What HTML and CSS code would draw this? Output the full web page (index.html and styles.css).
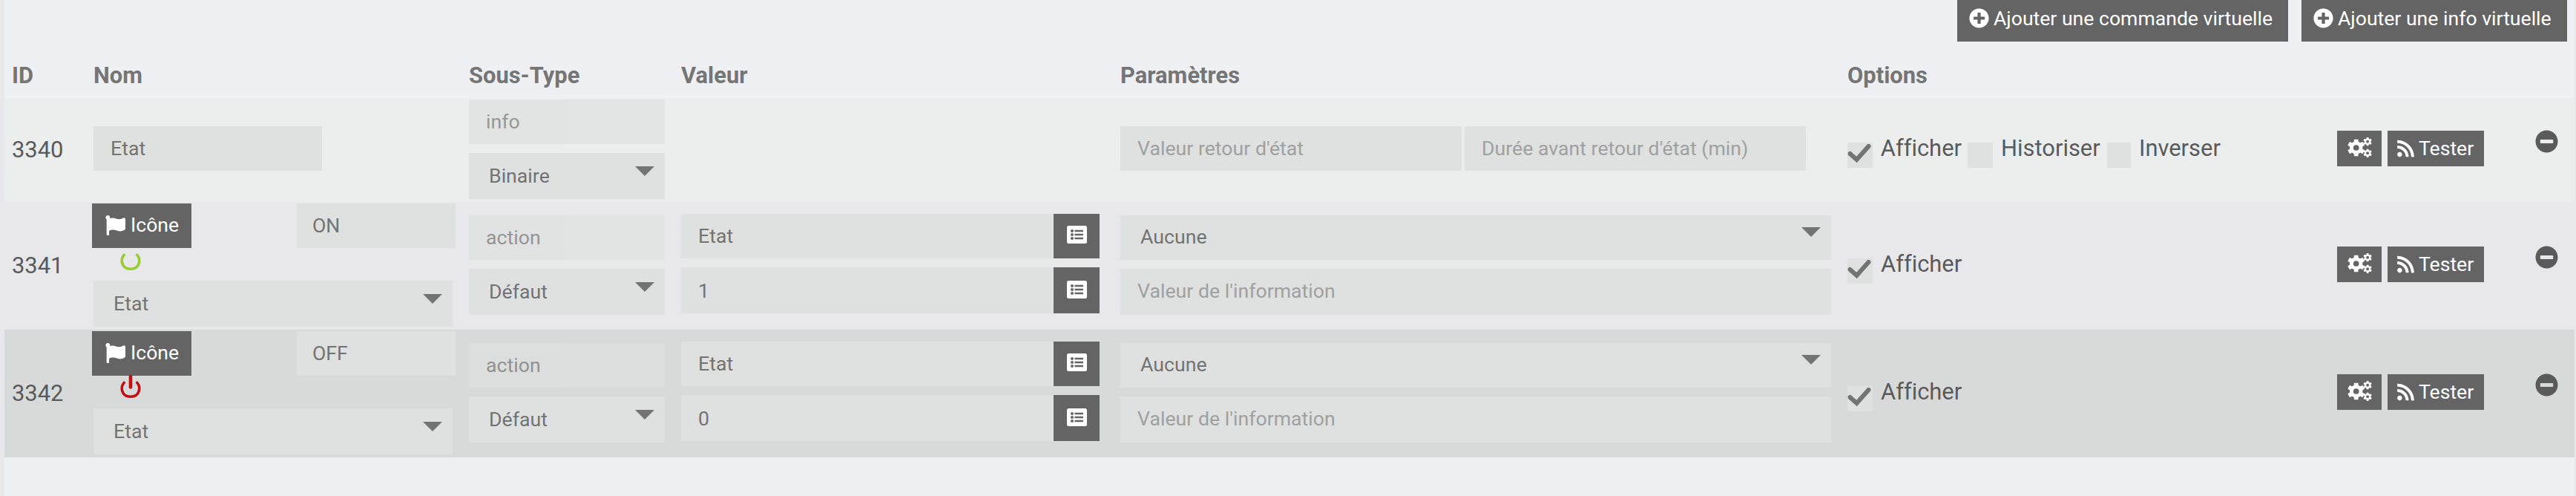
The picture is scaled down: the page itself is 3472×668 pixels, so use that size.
FILE: index.html
```
<!DOCTYPE html>
<html lang="fr">
<head>
<meta charset="utf-8">
<title>Commandes</title>
<link rel="stylesheet" href="styles.css">
</head>
<body>
<svg class="defs" width="0" height="0" aria-hidden="true">
  <symbol id="plus" viewBox="0 0 512 512"><path d="M256 8C119 8 8 119 8 256s111 248 248 248 248-111 248-248S393 8 256 8zm144 276c0 6.600-5.400 12-12 12h-92v92c0 6.600-5.400 12-12 12h-56c-6.600 0-12-5.400-12-12v-92h-92c-6.600 0-12-5.400-12-12v-56c0-6.600 5.400-12 12-12h92v-92c0-6.600 5.400-12 12-12h56c6.600 0 12 5.400 12 12v92h92c6.600 0 12 5.400 12 12v56z"/></symbol>
  <symbol id="minus" viewBox="0 0 512 512"><path d="M256 8C119 8 8 119 8 256s111 248 248 248 248-111 248-248S393 8 256 8zM124 296c-6.600 0-12-5.400-12-12v-56c0-6.600 5.400-12 12-12h264c6.600 0 12 5.400 12 12v56c0 6.600-5.400 12-12 12H124z"/></symbol>
  <symbol id="flag" viewBox="0 0 512 512"><path d="M349.565 98.783C295.978 98.783 251.721 64 184.348 64c-24.955 0-47.309 4.384-68.045 12.013a55.947 55.947 0 0 0 3.586-23.562C118.117 24.015 94.806 1.206 66.338.048 34.345-1.254 8 24.296 8 56c0 19.026 9.497 35.825 24 45.945V488c0 13.255 10.745 24 24 24h16c13.255 0 24-10.745 24-24v-94.400c28.311-12.064 63.582-22.122 114.435-22.122 53.588 0 97.844 34.783 165.217 34.783 48.169 0 86.667-16.294 122.505-40.858C506.840 359.452 512 349.571 512 339.045v-243.100c0-23.393-24.269-38.870-45.485-29.016-34.338 15.948-76.454 31.854-116.950 31.854z"/></symbol>
  <symbol id="rss" viewBox="0 0 448 512"><path d="M128.081 415.959c0 35.369-28.672 64.041-64.041 64.041S0 451.328 0 415.959s28.672-64.041 64.041-64.041 64.040 28.673 64.040 64.041zm175.660 47.250c-8.354-154.600-132.185-278.587-286.950-286.950C7.656 175.765 0 183.105 0 192.253v48.069c0 8.415 6.490 15.472 14.887 16.018 111.832 7.284 201.473 96.702 208.772 208.772.547 8.397 7.604 14.887 16.018 14.887h48.069c9.149.001 16.489-7.655 15.995-16.790zm144.249.288C439.596 229.677 251.465 40.445 16.503 32.010 7.473 31.686 0 38.981 0 48.016v48.068c0 8.625 6.835 15.645 15.453 15.999 191.179 7.839 344.627 161.316 352.465 352.465.353 8.618 7.373 15.453 15.999 15.453h48.068c9.034-.001 16.329-7.474 16.005-16.504z"/></symbol>
  <symbol id="list" viewBox="0 0 27 24"><rect width="27" height="24" rx="2.500"/><g fill="#646464"><circle cx="7" cy="7" r="2"/><circle cx="7" cy="12" r="2"/><circle cx="7" cy="17" r="2"/><rect x="10.500" y="5.700" width="11.500" height="2.600" rx=".5"/><rect x="10.500" y="10.700" width="11.500" height="2.600" rx=".5"/><rect x="10.500" y="15.700" width="11.500" height="2.600" rx=".5"/></g></symbol>
  <symbol id="gear" viewBox="-12 -12 24 24"><g fill="currentColor"><rect x="-3" y="-12" width="6" height="24" rx="1"/><rect x="-3" y="-12" width="6" height="24" rx="1" transform="rotate(60)"/><rect x="-3" y="-12" width="6" height="24" rx="1" transform="rotate(120)"/></g><circle r="6.500" fill="none" stroke="currentColor" stroke-width="5"/><circle r="4" fill="#646464"/></symbol>
  <symbol id="cogs" viewBox="0 0 34 28"><use href="#gear" x="0" y="2.500" width="24" height="24"/><use href="#gear" x="22" y="0" width="12" height="12"/><use href="#gear" x="22" y="16" width="12" height="12"/></symbol>
  <symbol id="check" viewBox="0 0 32 26"><path d="M3.500 14l9 8L28.500 4" fill="none" stroke="currentColor" stroke-width="6" stroke-linecap="round"/></symbol>
  <symbol id="ring" viewBox="0 0 28 32"><path d="M6.300 9.200C-.8 16 1.500 29.200 14 29.200S28.800 16 21.700 9.200" fill="none" stroke="currentColor" stroke-width="3.600"/></symbol>
  <symbol id="power" viewBox="0 0 28 32"><use href="#ring"/><path d="M14 2v14.500" stroke="currentColor" stroke-width="4.600" stroke-linecap="round"/></symbol>
</svg>
<main class="panel">
  <div class="toolbar">
    <a class="btn btn-add"><svg><use href="#plus"/></svg>Ajouter une commande virtuelle</a>
    <a class="btn btn-add"><svg><use href="#plus"/></svg>Ajouter une info virtuelle</a>
  </div>
  <div class="row head">
    <div>ID</div><div>Nom</div><div>Sous-Type</div><div>Valeur</div><div>Paramètres</div><div>Options</div>
  </div>

  <div class="row info">
    <div class="id">3340</div>
    <div><div class="field name-field">Etat</div></div>
    <div class="stack type">
      <div class="field disabled">info</div>
      <div class="field select">Binaire</div>
    </div>
    <div></div>
    <div class="pair">
      <div class="field hint">Valeur retour d'état</div>
      <div class="field hint">Durée avant retour d'état (min)</div>
    </div>
    <div class="options">
      <label class="opt-show"><span class="box"><svg><use href="#check"/></svg></span><span class="lbl">Afficher</span></label>
      <label class="opt-log"><span class="box"></span><span class="lbl">Historiser</span></label>
      <label><span class="box narrow"></span><span class="lbl">Inverser</span></label>
    </div>
    <div class="tools">
      <a class="btn btn-sm cog"><svg><use href="#cogs"/></svg></a>
      <a class="btn btn-sm test"><svg><use href="#rss"/></svg>Tester</a>
      <svg class="remove"><use href="#minus"/></svg>
    </div>
  </div>

  <div class="row action">
    <div class="id">3341</div>
    <div class="name">
      <div class="name-top">
        <a class="btn btn-icon"><svg><use href="#flag"/></svg>Icône</a>
        <div class="field">ON</div>
      </div>
      <svg class="state on"><use href="#ring"/></svg>
      <div class="field select">Etat</div>
    </div>
    <div class="stack type">
      <div class="field disabled">action</div>
      <div class="field select">Défaut</div>
    </div>
    <div class="stack value">
      <div class="group"><div class="field">Etat</div><a class="btn pick"><svg><use href="#list"/></svg></a></div>
      <div class="group"><div class="field">1</div><a class="btn pick"><svg><use href="#list"/></svg></a></div>
    </div>
    <div class="stack params">
      <div class="field select">Aucune</div>
      <div class="field hint">Valeur de l'information</div>
    </div>
    <div class="options">
      <label><span class="box"><svg><use href="#check"/></svg></span><span class="lbl">Afficher</span></label>
    </div>
    <div class="tools">
      <a class="btn btn-sm cog"><svg><use href="#cogs"/></svg></a>
      <a class="btn btn-sm test"><svg><use href="#rss"/></svg>Tester</a>
      <svg class="remove"><use href="#minus"/></svg>
    </div>
  </div>

  <div class="row action hover">
    <div class="id">3342</div>
    <div class="name">
      <div class="name-top">
        <a class="btn btn-icon"><svg><use href="#flag"/></svg>Icône</a>
        <div class="field">OFF</div>
      </div>
      <svg class="state off"><use href="#power"/></svg>
      <div class="field select">Etat</div>
    </div>
    <div class="stack type">
      <div class="field disabled">action</div>
      <div class="field select">Défaut</div>
    </div>
    <div class="stack value">
      <div class="group"><div class="field">Etat</div><a class="btn pick"><svg><use href="#list"/></svg></a></div>
      <div class="group"><div class="field">0</div><a class="btn pick"><svg><use href="#list"/></svg></a></div>
    </div>
    <div class="stack params">
      <div class="field select">Aucune</div>
      <div class="field hint">Valeur de l'information</div>
    </div>
    <div class="options">
      <label><span class="box"><svg><use href="#check"/></svg></span><span class="lbl">Afficher</span></label>
    </div>
    <div class="tools">
      <a class="btn btn-sm cog"><svg><use href="#cogs"/></svg></a>
      <a class="btn btn-sm test"><svg><use href="#rss"/></svg>Tester</a>
      <svg class="remove"><use href="#minus"/></svg>
    </div>
  </div>
</main>
</body>
</html>
```
FILE: styles.css
```
* { box-sizing: border-box; }
body {
  margin: 0;
  height: 668px;
  padding: 0 2px 0 6px;
  overflow: hidden;
  background: #e8e8ea;
  color: #5a5a5a;
  font: 30.9px/40px Roboto, sans-serif;
  font-variant-ligatures: none;
}
svg { display: block; fill: currentColor; flex: none; }
.defs { position: absolute; }
.panel { height: 668px; background: #eff0f3; }

.toolbar {
  height: 56px;
  display: flex;
  justify-content: flex-end;
  gap: 18px;
  padding-right: 10px;
}
.btn {
  display: flex;
  align-items: center;
  background: #646464;
  color: #fff;
  font-size: 26.6px;
  line-height: 30px;
  white-space: nowrap;
}
.btn-add { padding: 0 16px 7px; gap: 6px; }
.btn-add:first-child { width: 446px; }
.btn-add:last-child { width: 358px; }
.btn-add svg { width: 27px; height: 27px; }

.row {
  display: grid;
  grid-template-columns: 110px 506px 286px 592px 980px 660px 1fr;
  padding-left: 10px;
}
.head {
  height: 76px;
  padding-top: 26px;
  color: #757575;
  font-weight: 700;
}
.info { height: 140px; background: #eceeed; }
.action { height: 172px; background: #e8e8ea; }
.hover { background: #d8dad9; }

.id { align-self: center; }
.field {
  height: 60px;
  padding-left: 23px;
  background: #dfe1e0;
  color: #737373;
  font-size: 26.7px;
  line-height: 61px;
  white-space: nowrap;
}
.name-field { width: 308px; margin-top: 38px; }
.disabled { opacity: .7; }
.hint { color: #a0a0a0; }
.select {
  height: 62px;
  line-height: 62px;
  padding: 0 14px 0 27px;
  display: flex;
  justify-content: space-between;
}
.select::after {
  content: "";
  width: 26px;
  height: 13px;
  margin-top: 18px;
  background: #737373;
  clip-path: polygon(0 0, 100% 0, 50% 100%);
}
.stack { display: flex; flex-direction: column; gap: 12px; padding-top: 18px; }
.info .stack { padding-top: 2px; }
.type { width: 264px; }
.value { width: 564px; padding-top: 16px; }
.params { width: 958px; }
.params .field:first-child { height: 60px; line-height: 59px; }
.params .select::after { margin-top: 16px; }
.params .field:last-child { height: 62px; }
.group { display: flex; }
.group .field { flex: 1; line-height: 60px; }
.group:last-child .field { height: 62px; line-height: 64px; }
.pick { width: 62px; align-items: flex-start; justify-content: center; padding-top: 16px; }
.group:last-child .pick { padding-top: 18px; }
.pick svg { width: 27px; height: 24px; }

.pair { display: flex; gap: 4px; padding-top: 38px; }
.pair .field { width: 460px; }

.name { padding-top: 2px; }
.name-top { display: flex; justify-content: space-between; width: 490px; margin-left: -2px; }
.name-top .field { width: 214px; padding-left: 21px; line-height: 60px; }
.btn-icon { width: 134px; height: 60px; padding: 0 0 2px 18px; gap: 7px; }
.btn-icon svg { width: 27px; height: 27px; }
.state { width: 28px; height: 32px; margin: -1px 0 13px 36px; }
.on { color: #9c3; }
.off { color: #c01014; }
.name .select { width: 484px; }

.options { display: flex; gap: 8px; padding-top: 46px; }
.action .options { padding-top: 62px; }
.options label { display: flex; gap: 11px; }
.opt-show { width: 154px; }
.opt-log { width: 180px; }
.lbl { padding-top: 2px; }
.box { width: 34px; height: 34px; margin-top: 14px; padding-top: 1px; background: #dfe1e0; color: #737373; }
.box svg { width: 32px; height: 26px; }
.narrow { width: 32px; }

.tools { display: flex; align-items: flex-start; padding-top: 44px; }
.action .tools { padding-top: 60px; }
.btn-sm { height: 48px; margin-right: 8px; }
.cog { width: 60px; padding: 0 0 3px 14px; }
.cog svg { width: 33px; height: 27px; }
.test { width: 130px; padding: 0 0 1px 13px; gap: 6px; }
.test svg { width: 23px; height: 26px; }
.remove { width: 31px; height: 31px; margin: -1px 0 0 61px; }
```
